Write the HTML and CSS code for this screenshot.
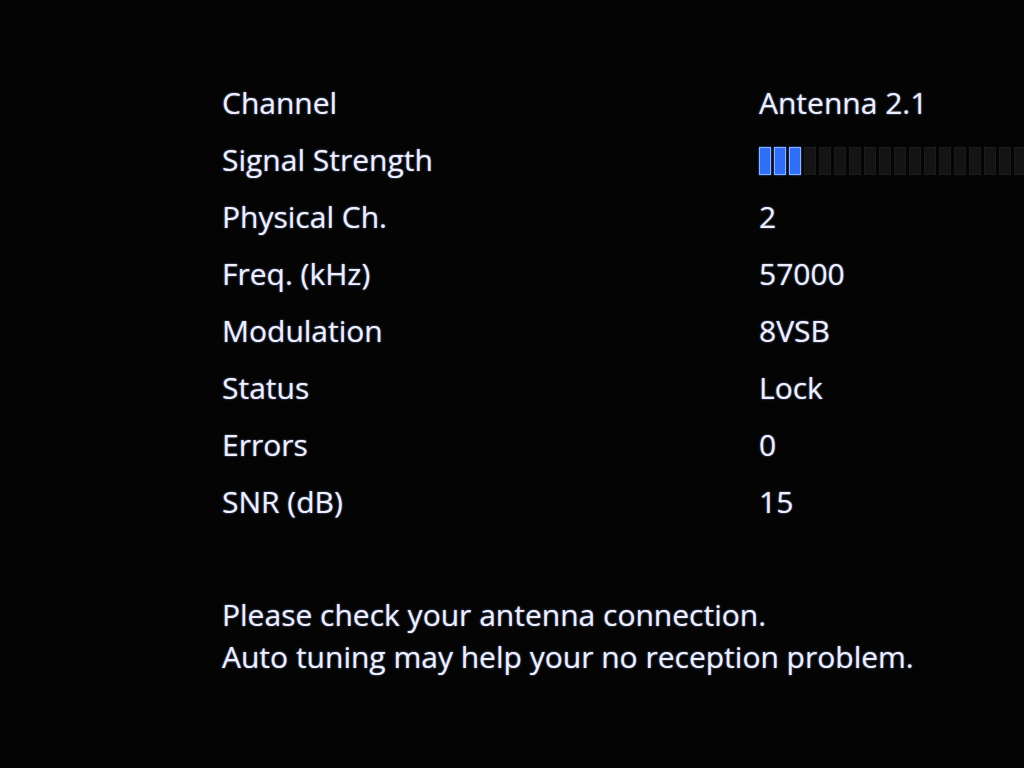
FILE: index.html
```html
<!DOCTYPE html>
<html lang="en">
<head>
<meta charset="utf-8">
<title>Signal Diagnostics</title>
<link rel="stylesheet" href="styles.css">
</head>
<body>
<main class="panel">
  <div class="rows">
    <div class="row"><span class="label">Channel</span><span class="value">Antenna 2.1</span></div>
    <div class="row"><span class="label">Signal Strength</span>
      <span class="value meter">
        <i class="seg on"></i><i class="seg on"></i><i class="seg on"></i>
        <i class="seg"></i><i class="seg"></i><i class="seg"></i><i class="seg"></i><i class="seg"></i>
        <i class="seg"></i><i class="seg"></i><i class="seg"></i><i class="seg"></i><i class="seg"></i>
        <i class="seg"></i><i class="seg"></i><i class="seg"></i><i class="seg"></i><i class="seg"></i>
        <i class="seg"></i><i class="seg"></i>
      </span>
    </div>
    <div class="row"><span class="label">Physical Ch.</span><span class="value">2</span></div>
    <div class="row"><span class="label">Freq. (kHz)</span><span class="value">57000</span></div>
    <div class="row"><span class="label">Modulation</span><span class="value">8VSB</span></div>
    <div class="row"><span class="label">Status</span><span class="value">Lock</span></div>
    <div class="row"><span class="label">Errors</span><span class="value">0</span></div>
    <div class="row"><span class="label">SNR (dB)</span><span class="value">15</span></div>
  </div>
  <p class="message">Please check your antenna connection.<br>Auto tuning may help your no reception problem.</p>
</main>
</body>
</html>
```

FILE: styles.css
```css
html, body {
  margin: 0;
  padding: 0;
  background: #040405;
  width: 1024px;
  height: 768px;
  overflow: hidden;
}
.panel {
  padding: 74px 0 0 222px;
  font-family: "Open Sans", "Noto Sans", sans-serif;
  font-size: 30px;
  color: #eef0ff;
  text-shadow: 0 0 2px rgba(170, 190, 255, 0.75);
}
.rows {
  display: flex;
  flex-direction: column;
}
.row {
  display: flex;
  align-items: center;
  height: 57px;
}
.label {
  width: 537px;
  flex: none;
}
.value {
  flex: none;
  white-space: nowrap;
}
.meter {
  display: flex;
  gap: 3px;
  height: 28px;
  margin-top: 2px;
}
.seg {
  display: block;
  width: 12px;
  height: 28px;
  flex: none;
  box-sizing: border-box;
  background: #141416;
  border: 1px solid #1b1b1e;
}
.seg.on {
  background: #2f6ef7;
  border: 1px solid #8fb4ff;
  box-shadow: 0 0 2px rgba(80, 130, 255, 0.8);
}
.message {
  margin: 64px 0 0;
  line-height: 42px;
}
```
